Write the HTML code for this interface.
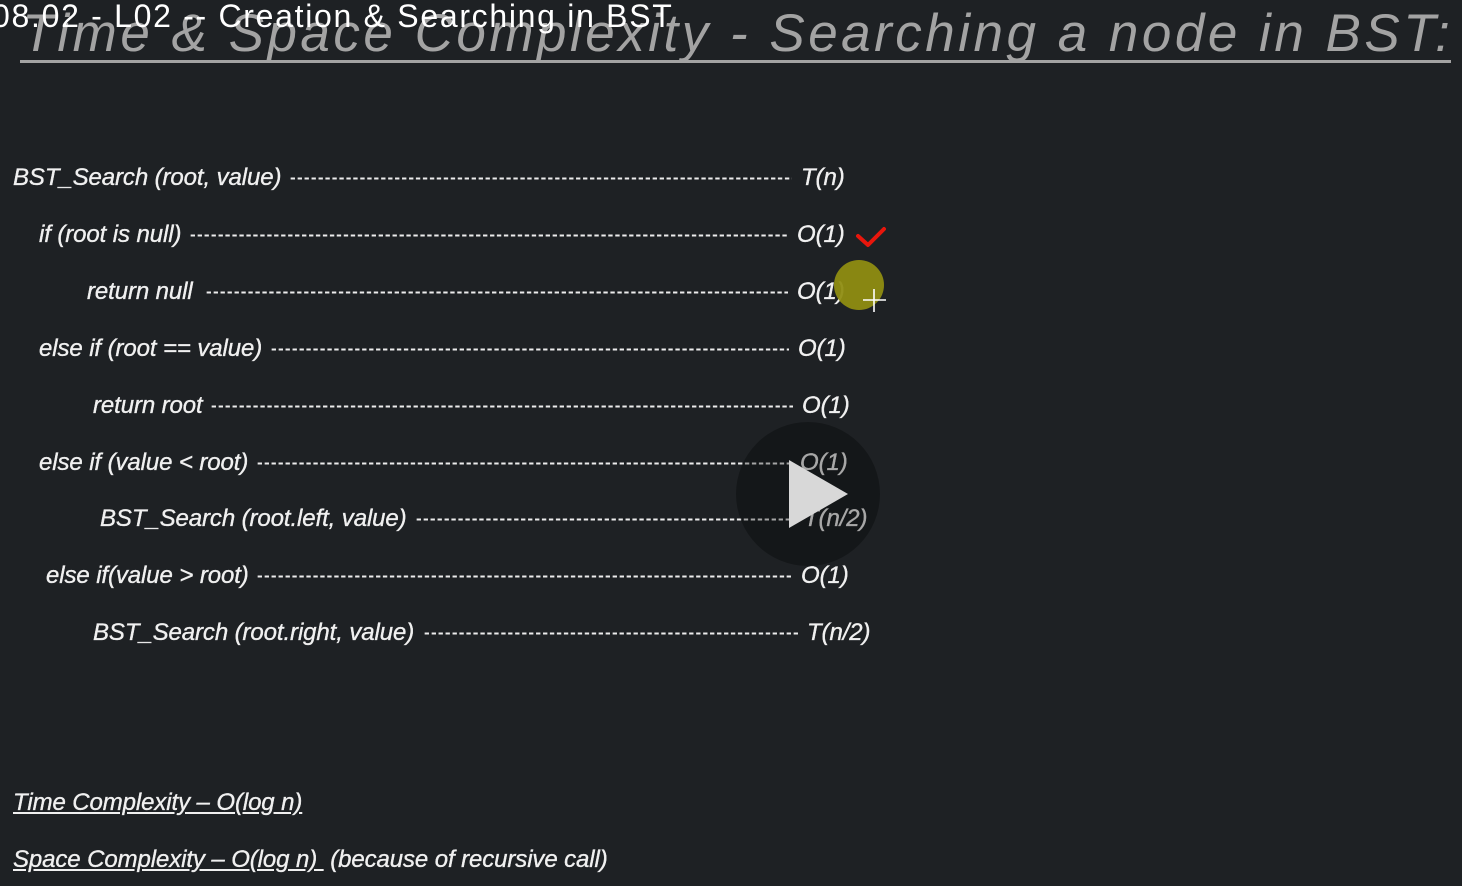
<!DOCTYPE html>
<html><head><style>
body{margin:0;width:1462px;height:886px;background:#1e2124;overflow:hidden;position:relative;font-family:"Liberation Sans",sans-serif}
.t{position:absolute;color:#f0f0f0;font-style:italic;font-size:24px;letter-spacing:-0.1px;line-height:26px;white-space:nowrap;-webkit-text-stroke:0.35px #f0f0f0}
.d{position:absolute;overflow:hidden;color:#ececec;font-size:17px;font-weight:bold;line-height:26px;white-space:nowrap;letter-spacing:1.3px}
</style></head><body>
<div style="position:absolute;left:22px;top:4px;font-style:italic;font-size:53px;color:#a3a3a3;letter-spacing:3.5px;white-space:nowrap;line-height:60px">Time &amp; Space Complexity - Searching a node in BST:</div>
<div style="position:absolute;left:20px;top:60px;width:1431px;height:3px;background:#a3a3a3"></div>
<div style="position:absolute;left:-8px;top:-4px;font-size:32px;color:#fff;white-space:nowrap;letter-spacing:1.7px;line-height:40px">08.02 - L02 -- Creation &amp; Searching in BST</div>

<div class="t" style="left:13px;top:165px">BST_Search (root, value)</div><div class="d" style="left:290px;top:165px;width:502px">--------------------------------------------------------------------------------------------------------------------</div><div class="t" style="left:801px;top:165px">T(n)</div>
<div class="t" style="left:39px;top:222px">if (root is null)</div><div class="d" style="left:190px;top:222px;width:598px">--------------------------------------------------------------------------------------------------------------------------------------------</div><div class="t" style="left:797px;top:222px">O(1)</div>
<div class="t" style="left:87px;top:279px">return null</div><div class="d" style="left:206px;top:279px;width:582px">--------------------------------------------------------------------------------------------------------------------------------------------</div><div class="t" style="left:797px;top:279px">O(1)</div>
<div class="t" style="left:39px;top:336px">else if (root == value)</div><div class="d" style="left:271px;top:336px;width:518px">--------------------------------------------------------------------------------------------------------------------------------------------</div><div class="t" style="left:798px;top:336px">O(1)</div>
<div class="t" style="left:93px;top:393px">return root</div><div class="d" style="left:211px;top:393px;width:582px">--------------------------------------------------------------------------------------------------------------------------------------------</div><div class="t" style="left:802px;top:393px">O(1)</div>
<div class="t" style="left:39px;top:450px">else if (value &lt; root)</div><div class="d" style="left:257px;top:450px;width:533px">--------------------------------------------------------------------------------------------------------------------------------------------</div><div class="t" style="left:800px;top:450px">O(1)</div>
<div class="t" style="left:100px;top:506px">BST_Search (root.left, value)</div><div class="d" style="left:416px;top:506px;width:379px">--------------------------------------------------------------------------------------------------------------------------------------------</div><div class="t" style="left:804px;top:506px">T(n/2)</div>
<div class="t" style="left:46px;top:563px">else if(value &gt; root)</div><div class="d" style="left:257px;top:563px;width:535px">--------------------------------------------------------------------------------------------------------------------------------------------</div><div class="t" style="left:801px;top:563px">O(1)</div>
<div class="t" style="left:93px;top:620px">BST_Search (root.right, value)</div><div class="d" style="left:424px;top:620px;width:375px">--------------------------------------------------------------------------------------------------------------------------------------------</div><div class="t" style="left:807px;top:620px">T(n/2)</div>

<div class="t" style="left:13px;top:790px;text-decoration:underline">Time Complexity – O(log n)</div>
<div class="t" style="left:13px;top:847px"><span style="text-decoration:underline">Space Complexity – O(log n)&nbsp;</span> (because of recursive call)</div>

<svg style="position:absolute;left:0;top:0" width="1462" height="886">
<path d="M858 236 L868 245 L884 229" stroke="#e8160c" stroke-width="4" fill="none" stroke-linecap="round" stroke-linejoin="round"/>
<circle cx="859" cy="285" r="25" fill="#8f8d12" opacity="0.95"/>
<path d="M874 289 V312 M863 300 H886" stroke="#fff" stroke-width="1.6"/>
<circle cx="808" cy="494" r="72" fill="#000" opacity="0.3"/>
<path d="M789 460 L848 494 L789 528 Z" fill="#d8d8d8"/>
</svg>
</body></html>
